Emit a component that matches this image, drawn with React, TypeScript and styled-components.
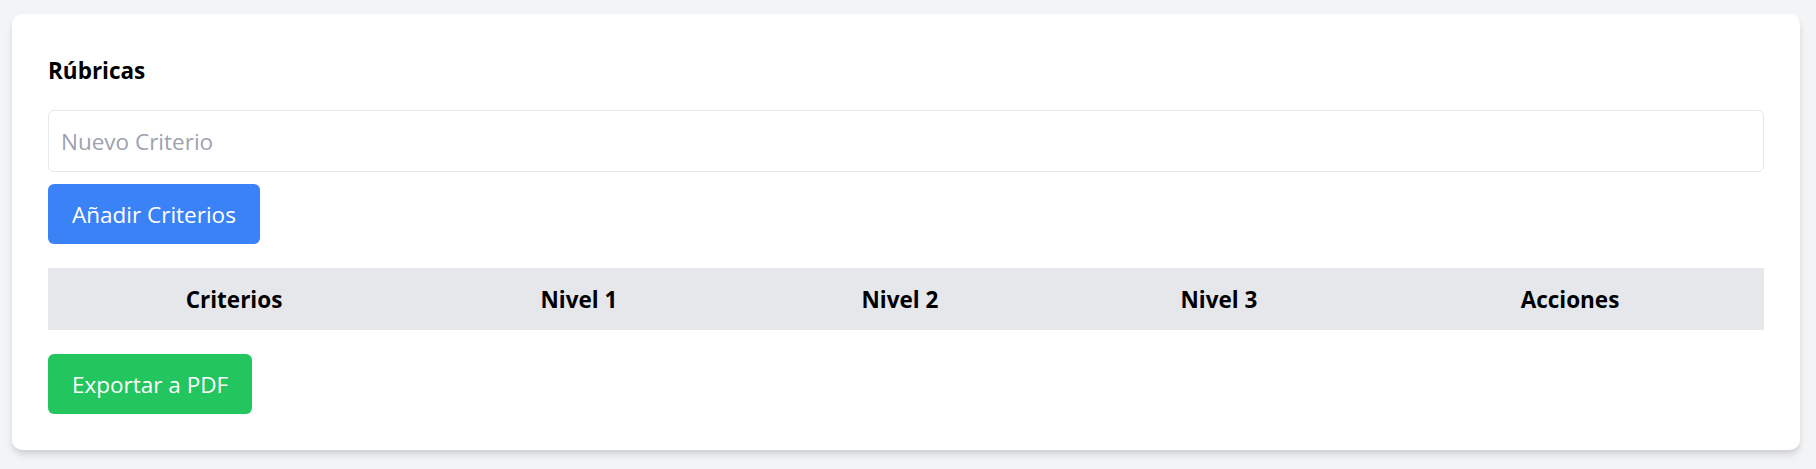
import React, { useState } from 'react';
import styled, { createGlobalStyle } from 'styled-components';

const GlobalStyle = createGlobalStyle`
  html, body {
    margin: 0;
    padding: 0;
    background: #f3f4f6;
  }
  body {
    font-family: "Open Sans", "Liberation Sans", sans-serif;
  }
  * {
    box-sizing: border-box;
  }
`;

const Page = styled.div`
  min-height: 469px;
  padding: 14px 16px 0 12px;
  background: #f3f4f6;
`;

const Card = styled.div`
  background: #fff;
  border-radius: 10px;
  padding: 36px;
  box-shadow: 0 6px 9px -1px rgba(0, 0, 0, 0.1), 0 3px 6px -2px rgba(0, 0, 0, 0.1);
  display: flex;
  flex-direction: column;
`;

const Title = styled.h2`
  margin: 0 0 18px;
  font-size: 22.5px;
  line-height: 42px;
  font-weight: 700;
  color: #000;
`;

const Input = styled.input`
  height: 62px;
  padding: 0 12px;
  border: 1px solid #e5e7eb;
  border-radius: 6px;
  font-family: inherit;
  font-size: 22.5px;
  color: #111827;
  margin-bottom: 12px;

  &::placeholder {
    color: #9ca3af;
  }
  &:focus {
    outline: none;
  }
`;

const Button = styled.button<{ $color: string }>`
  align-self: flex-start;
  height: 60px;
  padding: 0 24px;
  border: none;
  border-radius: 6px;
  background: ${p => p.$color};
  color: #fff;
  font-family: inherit;
  font-size: 22.5px;
  cursor: pointer;
`;

const Table = styled.table`
  width: 100%;
  border-collapse: collapse;
  table-layout: fixed;
  margin: 24px 0;
`;

const HeadRow = styled.tr`
  background: #e5e7eb;
`;

const Th = styled.th<{ $w: number }>`
  width: ${p => p.$w}px;
  height: 62px;
  padding: 0 12px;
  font-size: 22.5px;
  font-weight: 700;
  color: #000;
  text-align: center;
`;

const columns: [string, number][] = [
  ['Criterios', 372],
  ['Nivel 1', 318],
  ['Nivel 2', 324],
  ['Nivel 3', 314],
  ['Acciones', 388],
];

export default function App() {
  const [criterio, setCriterio] = useState('');

  return (
    <Page>
      <GlobalStyle />
      <Card>
        <Title>Rúbricas</Title>
        <Input
          placeholder="Nuevo Criterio"
          value={criterio}
          onChange={e => setCriterio(e.target.value)}
        />
        <Button $color="#3b82f6">Añadir Criterios</Button>
        <Table>
          <thead>
            <HeadRow>
              {columns.map(([label, w]) => (
                <Th key={label} $w={w}>{label}</Th>
              ))}
            </HeadRow>
          </thead>
          <tbody />
        </Table>
        <Button $color="#22c55e">Exportar a PDF</Button>
      </Card>
    </Page>
  );
}
